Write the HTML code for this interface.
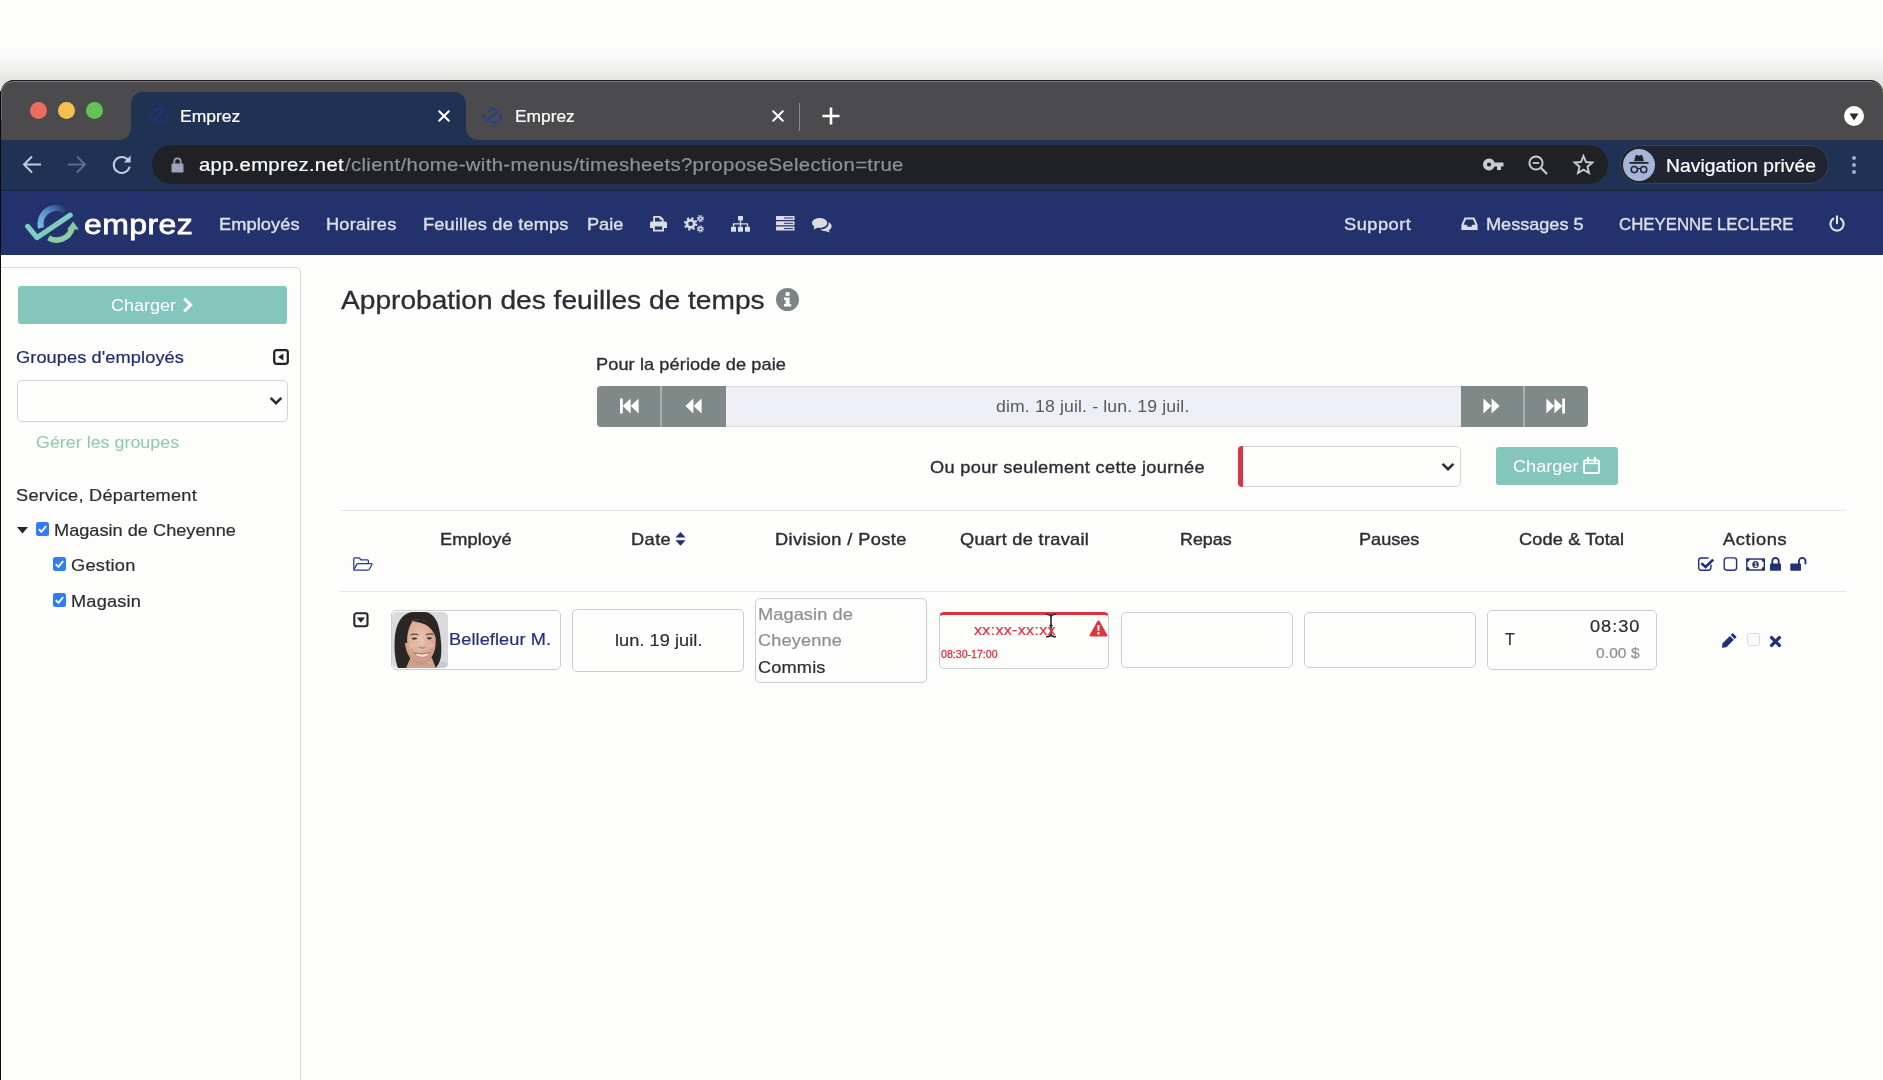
<!DOCTYPE html>
<html lang="fr">
<head>
<meta charset="utf-8">
<title>Emprez</title>
<style>
*{box-sizing:border-box;margin:0;padding:0}
html,body{width:1883px;height:1080px;overflow:hidden}
body{position:relative;background:#fdfdfb;font-family:"Liberation Sans",sans-serif;color:#212529}
.a{position:absolute}
.t{position:absolute;white-space:nowrap;line-height:1;transform-origin:0 50%}
svg{position:absolute;overflow:visible}
/* desktop backdrop above window */
#desk{left:0;top:0;width:1883px;height:100px;background:linear-gradient(#fefefc 0,#fefefc 47px,#fafafb 49px,#f9f9fa 58px,#f6f6f4 60px,#eeeeec 70px,#e5e5e3 80px)}
/* window */
#win{left:1px;top:80px;width:1882px;height:1000px;border-radius:13px 13px 0 0;background:#fdfdfb;overflow:hidden}
#winedge{left:1px;top:80px;width:1882px;height:40px;border-radius:13px 13px 0 0;border-top:1px solid #1c1c1c;box-shadow:inset 0 1px 0 #7b7b7d,inset 1px 0 0 #6a6a6c}
#leftline{left:0;top:91px;width:1px;height:989px;background:#0a0a0a}
#tabstrip{left:0;top:0;width:1883px;height:60px;background:#4b4b4d}
#toolbar{left:0;top:60px;width:1883px;height:51px;background:#1f3253}
#toolline{left:0;top:110px;width:1883px;height:1px;background:#17233f}
#navbar{left:0;top:111px;width:1883px;height:64px;background:#23316c}
.box{position:absolute;border:1px solid #cbcdd5;border-radius:5px;background:#fefefd}
</style>
</head>
<body>
<div class="a" id="desk"></div>
<div class="a" id="win">
<div class="a" id="tabstrip"></div>
<div class="a" id="toolbar"></div>
<div class="a" id="toolline"></div>
<div class="a" id="navbar"></div>
</div>
<div class="a" id="winedge"></div>
<!-- traffic lights -->
<div class="a" style="left:30px;top:102px;width:17px;height:17px;border-radius:50%;background:#ec6a5f"></div>
<div class="a" style="left:58px;top:102px;width:17px;height:17px;border-radius:50%;background:#f5bf4f"></div>
<div class="a" style="left:86px;top:102px;width:17px;height:17px;border-radius:50%;background:#61c455"></div>
<!-- active tab -->
<svg style="left:119px;top:92px" width="360" height="48" viewBox="0 0 360 48"><path d="M0 48 C7 48 12 43 12 36 V12 C12 5 17 0 24 0 H335 C342 0 347 5 347 12 V36 C347 43 352 48 359 48 Z" fill="#1f3253"/></svg>
<!-- favicon 1 (dim) -->
<svg style="left:147px;top:107px" width="23" height="17" viewBox="0 0 23 17" fill="none" stroke="#22337a" stroke-width="2.2" stroke-linecap="round" stroke-linejoin="round"><path d="M1.5 8.5 L6.5 13.5 L18 3"/><path d="M8 4.5 A6 6 0 0 1 15 2.2" stroke-width="2"/><path d="M19.5 8 A6 6 0 0 1 11 14.8" stroke-width="2"/></svg>
<!-- close 1 -->
<svg style="left:438px;top:110px" width="12" height="12" viewBox="0 0 12 12" stroke="#ffffff" stroke-width="2" stroke-linecap="round"><path d="M1.2 1.2 L10.8 10.8 M10.8 1.2 L1.2 10.8"/></svg>
<!-- favicon 2 -->
<svg style="left:481px;top:107px" width="23" height="17" viewBox="0 0 23 17" fill="none" stroke="#2a3d8c" stroke-width="2.2" stroke-linecap="round" stroke-linejoin="round"><path d="M1.5 8.5 L6.5 13.5 L18 3"/><path d="M8 4.5 A6 6 0 0 1 15 2.2" stroke-width="2"/><path d="M19.5 8 A6 6 0 0 1 11 14.8" stroke-width="2"/></svg>
<!-- close 2 -->
<svg style="left:772px;top:110px" width="12" height="12" viewBox="0 0 12 12" stroke="#ffffff" stroke-width="2" stroke-linecap="round"><path d="M1.2 1.2 L10.8 10.8 M10.8 1.2 L1.2 10.8"/></svg>
<!-- separator -->
<div class="a" style="left:799px;top:103px;width:1px;height:28px;background:#8c8c8e"></div>
<!-- plus -->
<svg style="left:822px;top:107px" width="18" height="18" viewBox="0 0 18 18" stroke="#ffffff" stroke-width="2.6" stroke-linecap="butt"><path d="M9 0.5 V17.5 M0.5 9 H17.5"/></svg>
<!-- tab search -->
<div class="a" style="left:1844.2px;top:105.9px;width:20px;height:20px;border-radius:50%;background:#ffffff"></div>
<svg style="left:1849.2px;top:112.6px" width="10" height="8" viewBox="0 0 10 8"><path d="M0.5 0.5 H9.5 L5 7.5 Z" fill="#2b2b2d"/></svg>
<!-- nav arrows -->
<svg style="left:22px;top:155px" width="20" height="19" viewBox="0 0 20 19" fill="none" stroke="#c3cbe0" stroke-width="2" stroke-linecap="butt" stroke-linejoin="miter"><path d="M19 9.5 H2.5 M10 1.5 L2 9.5 L10 17.5"/></svg>
<svg style="left:67px;top:155px" width="20" height="19" viewBox="0 0 20 19" fill="none" stroke="#5a6a96" stroke-width="2" stroke-linecap="butt" stroke-linejoin="miter"><path d="M1 9.5 H17.5 M10 1.5 L18 9.5 L10 17.5"/></svg>
<svg style="left:111px;top:154px" width="22" height="21" viewBox="0 0 22 21" fill="none" stroke="#c3cbe0" stroke-width="2"><path d="M17.2 6.2 A8 8 0 1 0 18.6 12.6"/><path d="M19.6 1.6 V8.4 H12.8 Z" fill="#c3cbe0" stroke="none"/></svg>
<!-- URL pill -->
<div class="a" style="left:152px;top:145px;width:1456px;height:39px;border-radius:20px;background:#202124"></div>
<!-- lock -->
<svg style="left:171px;top:157px" width="13" height="16" viewBox="0 0 13 16"><path d="M3.3 7 V4.6 A3.2 3.2 0 0 1 9.7 4.6 V7" fill="none" stroke="#9aa3b8" stroke-width="1.7"/><rect x="0.5" y="6.6" width="12" height="9" rx="1.3" fill="#9aa3b8"/></svg>
<!-- key -->
<svg style="left:1483px;top:158px" width="21" height="13" viewBox="0 0 21 13"><path fill="#c9cbcd" fill-rule="evenodd" d="M6 0.5 A6 6 0 1 0 11.6 8.6 H14 V12 H18 V8.6 H20.5 V4.4 H11.6 A6 6 0 0 0 6 0.5 Z M6 4.4 A2.1 2.1 0 1 1 6 8.6 A2.1 2.1 0 0 1 6 4.4 Z"/></svg>
<!-- zoom -->
<svg style="left:1528px;top:155px" width="20" height="20" viewBox="0 0 20 20" fill="none" stroke="#c9cbcd" stroke-width="2"><circle cx="8" cy="8" r="6.6"/><path d="M12.8 12.8 L19 19" stroke-width="2.2"/><path d="M4.8 8 H11.2" stroke-width="1.8"/></svg>
<!-- star -->
<svg style="left:1573px;top:154px" width="21" height="20" viewBox="0 0 21 20" fill="none" stroke="#c9cbcd" stroke-width="1.9" stroke-linejoin="miter"><path d="M10.5 2 L13 8 L19.4 8.5 L14.5 12.7 L16 19 L10.5 15.6 L5 19 L6.5 12.7 L1.6 8.5 L8 8 Z"/></svg>
<!-- incognito pill -->
<div class="a" style="left:1620px;top:145px;width:209px;height:39px;border-radius:20px;background:#212431;border:1px solid #39415a"></div>
<div class="a" style="left:1623px;top:149px;width:32px;height:32px;border-radius:50%;background:#a6b6d9"></div>
<svg style="left:1629px;top:154px" width="20" height="22" viewBox="0 0 20 22"><path d="M5 7.2 L6.6 1.6 Q6.9 0.8 7.8 1 L10 1.7 L12.2 1 Q13.1 0.8 13.4 1.6 L15 7.2 Z" fill="#1f2330"/><rect x="0.5" y="8" width="19" height="1.8" fill="#1f2330"/><circle cx="5.3" cy="15.6" r="3.1" fill="none" stroke="#1f2330" stroke-width="1.5"/><circle cx="14.7" cy="15.6" r="3.1" fill="none" stroke="#1f2330" stroke-width="1.5"/><path d="M8.3 15 Q10 13.8 11.7 15" fill="none" stroke="#1f2330" stroke-width="1.4"/></svg>
<!-- menu dots -->
<div class="a" style="left:1852px;top:155.6px;width:4.4px;height:4.4px;border-radius:50%;background:#a0acd3"></div>
<div class="a" style="left:1852px;top:162.8px;width:4.4px;height:4.4px;border-radius:50%;background:#a0acd3"></div>
<div class="a" style="left:1852px;top:169.9px;width:4.4px;height:4.4px;border-radius:50%;background:#a0acd3"></div>

<!-- logo -->
<svg style="left:22px;top:202px" width="60" height="44" viewBox="22 202 60 44" fill="none">
<defs><linearGradient id="lgb" gradientUnits="userSpaceOnUse" x1="40" y1="230" x2="66" y2="207"><stop offset="0" stop-color="#7bbdea"/><stop offset="0.5" stop-color="#5a8ec2"/><stop offset="0.8" stop-color="#3d5a96"/><stop offset="1" stop-color="#2a3a78" stop-opacity="0.3"/></linearGradient></defs>
<path d="M41.0 227.9 A16 16 0 0 1 65.0 210.4" stroke="url(#lgb)" stroke-width="6.2"/>
<path d="M48.5 237.9 A16 16 0 0 0 71.9 228.4" stroke="#8fcba3" stroke-width="5.6"/>
<path d="M67 229.4 L73.2 221.4 L78.8 229.4 Z" fill="#86c79b"/>
<path d="M27.7 226.4 L37 237.6 L70.2 215.2" stroke="#7fccc2" stroke-width="5.2" stroke-linecap="round" stroke-linejoin="round"/>
</svg>
<!-- nav icons -->
<svg style="left:650px;top:216px" width="17" height="16" viewBox="0 0 17 16" fill="#dcdde4"><path fill-rule="evenodd" d="M3.2 0 H10.4 L13.6 3 V6 H3.2 Z M5 1.8 V6 H11.8 V3.8 H9.6 V1.8 Z"/><path fill-rule="evenodd" d="M1.6 5.6 H15.4 A1.6 1.6 0 0 1 17 7.2 V12 H14 V15.6 H3 V12 H0 V7.2 A1.6 1.6 0 0 1 1.6 5.6 Z M4.8 10.6 V13.8 H12.2 V10.6 Z"/></svg>
<svg style="left:684px;top:215px" width="21" height="18" viewBox="0 0 21 18" fill="none" stroke="#dcdde4"><circle cx="6.6" cy="8.8" r="3.6" stroke-width="2.6"/><circle cx="6.6" cy="8.8" r="5.6" stroke-width="2.2" stroke-dasharray="2.2 2.2"/><circle cx="16.4" cy="3.6" r="1.7" stroke-width="1.5"/><circle cx="16.4" cy="3.6" r="3" stroke-width="1.3" stroke-dasharray="1.2 1.15"/><circle cx="16.4" cy="13.9" r="1.7" stroke-width="1.5"/><circle cx="16.4" cy="13.9" r="3" stroke-width="1.3" stroke-dasharray="1.2 1.15"/></svg>
<svg style="left:731px;top:216px" width="19" height="16" viewBox="0 0 19 16" fill="#dcdde4"><rect x="7" y="0" width="5" height="4.6" rx="0.6"/><rect x="0" y="10.8" width="5" height="5" rx="0.6"/><rect x="7" y="10.8" width="5" height="5" rx="0.6"/><rect x="14" y="10.8" width="5" height="5" rx="0.6"/><path d="M9.5 4.6 V10.8 M2.5 10.8 V7.8 H16.5 V10.8" fill="none" stroke="#dcdde4" stroke-width="1.3"/></svg>
<svg style="left:776px;top:216px" width="19" height="15" viewBox="0 0 19 15" fill="#dcdde4"><rect x="0" y="0" width="18.5" height="4" rx="0.6"/><rect x="0" y="5.3" width="18.5" height="4" rx="0.6"/><rect x="0" y="10.6" width="18.5" height="4" rx="0.6"/><path d="M8 2 H17 M8 7.3 H17 M8 12.6 H17" stroke="#23316c" stroke-width="1"/></svg>
<svg style="left:812px;top:218px" width="20" height="15" viewBox="0 0 20 15" fill="#dcdde4"><ellipse cx="7.6" cy="5" rx="7.6" ry="5"/><path d="M2.4 8 L1.6 11.4 L6 9.4 Z"/><path d="M16.4 4.2 A6.2 4.6 0 0 1 16.6 12.2 L18.2 14.6 L14 13.2 A7.5 5 0 0 1 8.2 11.6 A9 6 0 0 0 16.4 4.2 Z"/></svg>
<!-- inbox icon (Messages) -->
<svg style="left:1461px;top:217px" width="17" height="14" viewBox="0 0 17 14" fill="#dcdde4"><path fill-rule="evenodd" d="M3.6 0.6 H13.4 L16.6 7.8 V13 H0.4 V7.8 Z M4.9 2.4 L2.6 7.8 H5.6 L6.6 9.8 H10.4 L11.4 7.8 H14.4 L12.1 2.4 Z"/></svg>
<!-- power -->
<svg style="left:1829px;top:215px" width="16" height="17" viewBox="0 0 16 17" fill="none" stroke="#e4e5ea" stroke-width="2.1" stroke-linecap="round"><path d="M8 1.2 V8.2"/><path d="M4.3 3.6 A6.6 6.6 0 1 0 11.7 3.6"/></svg>
<!-- sidebar -->
<div class="a" style="left:-4px;top:267px;width:305px;height:830px;border:1px solid #d8d8da;border-radius:0 5px 0 0;background:#fdfdfb"></div>
<div class="a" style="left:18px;top:286px;width:269px;height:38px;border-radius:3px;background:#84c6bb"></div>
<svg style="left:182px;top:297px" width="11" height="16" viewBox="0 0 11 16"><path d="M2.2 1.6 L8.6 8 L2.2 14.4" fill="none" stroke="#fff" stroke-width="3" stroke-linejoin="miter"/></svg>
<!-- caret-square-left -->
<svg style="left:273px;top:349px" width="16" height="16" viewBox="0 0 16 16"><rect x="1.2" y="1.2" width="13.6" height="13.6" rx="2.2" fill="none" stroke="#202124" stroke-width="2.2"/><path d="M10.4 4.4 V11.6 L5 8 Z" fill="#202124"/></svg>
<!-- select -->
<div class="box" style="left:16.6px;top:380.2px;width:271.8px;height:41.4px;border-color:#d3d4da"></div>
<svg style="left:269px;top:396px" width="14" height="10" viewBox="0 0 14 10"><path d="M1.6 1.8 L7 7.2 L12.4 1.8" fill="none" stroke="#2b2d31" stroke-width="2.5"/></svg>
<!-- tree -->
<svg style="left:17px;top:527px" width="11" height="7" viewBox="0 0 11 7"><path d="M0 0 H11 L5.5 6.6 Z" fill="#212529"/></svg>
<div class="a" style="left:36px;top:522px;width:13px;height:14px;border-radius:2.5px;background:#2f7df6"></div>
<svg style="left:36px;top:522px" width="13" height="14" viewBox="0 0 13 14"><path d="M2.8 7.2 L5.4 9.8 L10.2 4" fill="none" stroke="#fff" stroke-width="1.9"/></svg>
<div class="a" style="left:53px;top:557px;width:13px;height:14px;border-radius:2.5px;background:#2f7df6"></div>
<svg style="left:53px;top:557px" width="13" height="14" viewBox="0 0 13 14"><path d="M2.8 7.2 L5.4 9.8 L10.2 4" fill="none" stroke="#fff" stroke-width="1.9"/></svg>
<div class="a" style="left:53px;top:593px;width:13px;height:14px;border-radius:2.5px;background:#2f7df6"></div>
<svg style="left:53px;top:593px" width="13" height="14" viewBox="0 0 13 14"><path d="M2.8 7.2 L5.4 9.8 L10.2 4" fill="none" stroke="#fff" stroke-width="1.9"/></svg>
<!-- info icon -->
<div class="a" style="left:776px;top:288px;width:23px;height:23px;border-radius:50%;background:#7c8586"></div>
<svg style="left:776px;top:288px" width="23" height="23" viewBox="0 0 23 23" fill="#fdfdfb"><rect x="9.6" y="4.2" width="4" height="3.6"/><path d="M8 9.6 H13.6 V16 H15.2 V18.4 H8 V16 H9.6 V12 H8 Z"/></svg>
<!-- period bar -->
<div class="a" style="left:597px;top:386px;width:991px;height:41px;border-radius:4px;background:#eeeef5;border:1px solid #d9dae2"></div>
<div class="a" style="left:597px;top:386px;width:129px;height:41px;border-radius:4px 0 0 4px;background:#7f8988"></div>
<div class="a" style="left:660px;top:386px;width:2px;height:41px;background:#a9b0af"></div>
<div class="a" style="left:1461px;top:386px;width:127px;height:41px;border-radius:0 4px 4px 0;background:#7f8988"></div>
<div class="a" style="left:1523px;top:386px;width:2px;height:41px;background:#a9b0af"></div>
<svg style="left:620px;top:398px" width="19" height="16" viewBox="0 0 19 16" fill="#fff"><rect x="0" y="0.5" width="2.8" height="15"/><path d="M10.6 0.5 V15.5 L2.8 8 Z M18.6 0.5 V15.5 L10.8 8 Z"/></svg>
<svg style="left:685px;top:398px" width="17" height="16" viewBox="0 0 17 16" fill="#fff"><path d="M8.4 0.5 V15.5 L0.4 8 Z M16.6 0.5 V15.5 L8.6 8 Z"/></svg>
<svg style="left:1483px;top:398px" width="17" height="16" viewBox="0 0 17 16" fill="#fff"><path d="M0.4 0.5 V15.5 L8.4 8 Z M8.6 0.5 V15.5 L16.6 8 Z"/></svg>
<svg style="left:1546px;top:398px" width="19" height="16" viewBox="0 0 19 16" fill="#fff"><path d="M0.4 0.5 V15.5 L8.2 8 Z M8.4 0.5 V15.5 L16.2 8 Z"/><rect x="16.2" y="0.5" width="2.8" height="15"/></svg>
<!-- day select -->
<div class="box" style="left:1238px;top:446px;width:223px;height:41px;border-color:#d3d4da"></div>
<div class="a" style="left:1238px;top:446px;width:5px;height:41px;border-radius:4px 0 0 4px;background:#dc3545"></div>
<svg style="left:1441px;top:462px" width="14" height="10" viewBox="0 0 14 10"><path d="M1.6 1.8 L7 7.2 L12.4 1.8" fill="none" stroke="#2b2d31" stroke-width="2.5"/></svg>
<!-- charger button 2 -->
<div class="a" style="left:1496px;top:447px;width:122px;height:38px;border-radius:3px;background:#84c6bb"></div>
<svg style="left:1583px;top:457px" width="17" height="17" viewBox="0 0 17 17" fill="none" stroke="#fff"><rect x="1" y="3.4" width="15" height="12.6" rx="1" stroke-width="1.8"/><path d="M1 6.4 H16" stroke-width="1.6"/><path d="M5 0.8 V4.6 M12 0.8 V4.6" stroke-width="2.2" stroke-linecap="round"/></svg>
<!-- table lines -->
<div class="a" style="left:340px;top:510px;width:1506px;height:1px;background:#e3e5ee"></div>
<div class="a" style="left:340px;top:591px;width:1506px;height:1px;background:#e3e5ee"></div>
<!-- folder-open-o -->
<svg style="left:353px;top:557px" width="20" height="14" viewBox="0 0 20 14" fill="none" stroke="#2a3a84" stroke-width="1.25" stroke-linejoin="round"><path d="M0.8 11.8 V1.8 Q0.8 0.8 1.8 0.8 H5.8 Q6.6 0.8 7 1.6 L7.6 2.8 H14.4 Q15.4 2.8 15.4 3.8 V6.6"/><path d="M0.9 12.4 L3.8 7.4 Q4.2 6.7 5 6.7 H18.4 Q19.3 6.7 18.9 7.5 L16.2 12.5 Q15.8 13.2 15 13.2 H1.5 Q0.6 13.2 0.9 12.4 Z"/></svg>
<!-- sort icon -->
<svg style="left:675px;top:532px" width="11" height="14" viewBox="0 0 11 14" fill="#22307a"><path d="M5.5 0 L10.6 5.6 H0.4 Z M0.4 8.2 H10.6 L5.5 13.8 Z"/></svg>
<!-- header action icons -->
<svg style="left:1690px;top:550px" width="125" height="30" viewBox="1690 550 125 30" fill="none" stroke="#22307a">
<path d="M1710.9 564.4 V567.8 Q1710.9 570.2 1708.5 570.2 H1701.1 Q1698.7 570.2 1698.7 567.8 V560.4 Q1698.7 558 1701.1 558 H1708.6" stroke-width="1.4"/>
<path d="M1701.4 563.3 L1705.6 566.9 L1713.2 559.6" stroke-width="2.7"/>
<rect x="1724.2" y="557.9" width="12.4" height="12.3" rx="2.6" stroke-width="1.4"/>
<rect x="1746.1" y="558.3" width="18.9" height="12.4" fill="#22307a" stroke="none"/>
<path d="M1749.6 559.8 H1761.5 A2.2 2.2 0 0 0 1763.6 561.9 V567.1 A2.2 2.2 0 0 0 1761.5 569.2 H1749.6 A2.2 2.2 0 0 0 1747.5 567.1 V561.9 A2.2 2.2 0 0 0 1749.6 559.8 Z" fill="#fdfdfb" stroke="none"/>
<ellipse cx="1755.5" cy="564.5" rx="3.2" ry="3.5" fill="#22307a" stroke="none"/>
<path d="M1754.6 563.2 L1755.9 562.4 V566.2 M1754.5 566.4 H1757.2" stroke="#fdfdfb" stroke-width="1"/>
<path d="M1772.3 564 V561.2 A3.2 3.2 0 0 1 1778.7 561.2 V564" stroke-width="1.9"/>
<rect x="1770" y="563.6" width="11" height="7.1" rx="0.8" fill="#22307a" stroke="none"/>
<path d="M1798.9 564 V561.2 A3.3 3.3 0 0 1 1805.5 561.2 V563.6" stroke-width="1.9" stroke-linecap="round"/>
<rect x="1790.3" y="563.6" width="10.7" height="7.1" rx="0.8" fill="#22307a" stroke="none"/>
</svg>
<!-- caret-square-down -->
<svg style="left:353px;top:611.5px" width="16" height="16" viewBox="0 0 16 16"><rect x="1.3" y="1.3" width="13.2" height="13" rx="2.2" fill="none" stroke="#27292c" stroke-width="2.1"/><path d="M3.8 5.6 H12 L7.9 10.8 Z" fill="#27292c"/></svg>
<!-- row boxes -->
<div class="box" style="left:391px;top:610px;width:170px;height:60px"></div>
<div class="box" style="left:572px;top:609px;width:172px;height:63px"></div>
<div class="box" style="left:755px;top:598px;width:172px;height:85px"></div>
<div class="box" style="left:939px;top:611.6px;width:170px;height:57.6px;border-top:3px solid #e0323c"></div>
<div class="box" style="left:1121px;top:612px;width:172px;height:56px"></div>
<div class="box" style="left:1304px;top:612px;width:172px;height:56px"></div>
<div class="box" style="left:1487px;top:610px;width:170px;height:60px"></div>
<!-- warning triangle -->
<svg style="left:1089px;top:620px" width="19" height="17" viewBox="0 0 19 17"><path d="M9.5 0.6 Q10.3 0.6 10.8 1.5 L18.4 14.9 Q18.9 16.6 17.2 16.6 H1.8 Q0.1 16.6 0.6 14.9 L8.2 1.5 Q8.7 0.6 9.5 0.6 Z" fill="#e0343f"/><path d="M8.3 5.2 H10.7 L10.3 11 H8.7 Z" fill="#fdfdfb"/><rect x="8.4" y="12.2" width="2.2" height="2.2" fill="#fdfdfb"/></svg>
<!-- I-beam cursor -->
<svg style="left:1045px;top:613px" width="12" height="25" viewBox="0 0 12 25" fill="none" stroke="#2a2a2a" stroke-width="1.6"><path d="M1 1.2 Q5 1 6 3.4 Q7 1 11 1.2 M6 3.2 V21.8 M1 23.8 Q5 24 6 21.6 Q7 24 11 23.8 M4.4 12.6 H7.6"/></svg>
<!-- row actions -->
<svg style="left:1721px;top:632.4px" width="17" height="16.4" viewBox="0 0 16 16" fill="#22307a"><path d="M11.2 1 L15 4.8 L13 6.8 L9.2 3 Z M8.4 3.8 L12.2 7.6 L5 14.8 L0.6 15.4 L1.2 11 Z"/></svg>
<div class="a" style="left:1746.6px;top:633.2px;width:13.4px;height:12.8px;border:1px solid #d9dae0;border-radius:2.5px;background:#f9f9fb"></div>
<svg style="left:1769.2px;top:634.6px" width="13" height="13" viewBox="0 0 13 13" stroke="#22307a" stroke-width="3.3" stroke-linecap="round"><path d="M2.6 2.6 L10.4 10.4 M10.4 2.6 L2.6 10.4"/></svg>
<!-- avatar -->
<svg style="left:392px;top:611.6px" width="56" height="56" viewBox="0 0 56 56"><defs><clipPath id="avc"><rect x="0" y="0" width="56" height="56" rx="5"/></clipPath><filter id="avb" x="-10%" y="-10%" width="120%" height="120%"><feGaussianBlur stdDeviation="0.75"/></filter><radialGradient id="avs" cx="0.5" cy="0.4" r="0.62"><stop offset="0" stop-color="#e8c3b1"/><stop offset="0.55" stop-color="#ddb09a"/><stop offset="1" stop-color="#c2937d"/></radialGradient></defs><g clip-path="url(#avc)"><rect width="56" height="56" fill="#dadadc"/><g filter="url(#avb)"><path d="M43 56 L47 49 L56 51 V56 Z" fill="#c9cad0"/><path d="M6 56 C3 48 2 38 2.8 26 C3.4 17 6 10 10 5.6 C13 2 17 0 22 0 H33 C38 0.4 42 4 44.6 9 C47 14 48.4 22 49 30 C49.6 38 49.6 46 47.4 50 C46.4 52.6 45 54.6 43.6 56 Z" fill="#2b2827"/><path d="M14 56 L18.4 46 H40 L43.8 56 Z" fill="#cfa28c"/><path d="M12.8 30 C12.2 22 14.4 14 18.8 8.6 C22 7.4 28 7.4 32 8.2 C37 9.4 42 15 43.4 23 C44.2 29 43.8 34 42.4 39 C40.6 45 36 52 29.6 53 C24 53.4 18 47.6 15.4 41 C13.8 37 13 33 12.8 30 Z" fill="url(#avs)"/><path d="M12.4 31 C11 22 13 13 18.6 7.4 L20.6 9 C16.6 15 14.8 23 15.2 31 Z" fill="#2b2827"/><path d="M19 8.8 C25 7 33 7.4 38 11 C42 14 44 20 44.4 27 C42 20 38 14.4 32 12 C27 10 22 9.6 19 8.8 Z" fill="#2b2827"/><ellipse cx="20.5" cy="33.6" rx="3.4" ry="2.2" fill="#eab8b0" opacity="0.75"/><ellipse cx="39" cy="33.2" rx="3" ry="2.2" fill="#eab8b0" opacity="0.75"/><path d="M22 41 Q30 43.6 38 40.6 Q36 46.6 30 46.8 Q24 46.6 22 41 Z" fill="#cf8f8e"/><path d="M23.4 41.6 Q30 43.6 36.8 41.2 Q34.6 44.8 30 44.8 Q25.4 44.8 23.4 41.6 Z" fill="#f4e8e2"/><path d="M21.4 40.8 Q30 43.2 38.6 40.4" stroke="#a46a5c" stroke-width="0.9" fill="none"/><ellipse cx="22.4" cy="26.6" rx="2.7" ry="1.15" fill="#44332e"/><ellipse cx="37.4" cy="26.3" rx="2.6" ry="1.15" fill="#44332e"/><path d="M18.4 23 Q22 21.4 26.4 22.8 M34 22.8 Q38 21.2 41.4 22.4" stroke="#584640" stroke-width="1.1" fill="none"/><path d="M27.2 35 Q30.4 37 33.6 35" stroke="#b98572" stroke-width="1.3" fill="none"/><path d="M30.4 27 V34" stroke="#ecc9b8" stroke-width="2" opacity="0.7"/><path d="M19.6 37 Q21 40 22 41.4 M40 36.6 Q39 40 38 41" stroke="#c0907c" stroke-width="0.8" fill="none"/></g></g></svg>

<div class="a" style="left:0;top:0;width:1883px;height:1080px;will-change:transform">
<div class="t" style="left:180.1px;top:108px;font-size:16.5px;color:#ffffff;transform:scaleX(1.062);-webkit-text-stroke:0.2px #ffffff">Emprez</div>
<div class="t" style="left:514.9px;top:108px;font-size:16.5px;color:#ffffff;transform:scaleX(1.051);-webkit-text-stroke:0.2px #ffffff">Emprez</div>
<div class="t" style="left:198.7px;top:155px;font-size:19px;color:#ffffff;letter-spacing:0.24px;transform:scaleX(1.07);-webkit-text-stroke:0.2px #ffffff">app.emprez.net</div>
<div class="t" style="left:345.2px;top:155px;font-size:19px;color:#8f9297;letter-spacing:0.32px;transform:scaleX(1.07);-webkit-text-stroke:0.2px #8f9297">/client/home-with-menus/timesheets?proposeSelection=true</div>
<div class="t" style="left:1665.6px;top:157px;font-size:18px;color:#ffffff;letter-spacing:0.07px;transform:scaleX(1.07);-webkit-text-stroke:0.2px #ffffff">Navigation privée</div>
<div class="t" style="left:84.0px;top:210px;font-size:28.5px;color:#ffffff;letter-spacing:0.42px;transform:scaleX(1.12);-webkit-text-stroke:0.8px #ffffff">emprez</div>
<div class="t" style="left:218.6px;top:216px;font-size:17px;color:#dfe0e7;letter-spacing:0.09px;transform:scaleX(1.07);-webkit-text-stroke:0.35px #dfe0e7">Employés</div>
<div class="t" style="left:325.9px;top:216px;font-size:17px;color:#dfe0e7;letter-spacing:0.21px;transform:scaleX(1.07);-webkit-text-stroke:0.35px #dfe0e7">Horaires</div>
<div class="t" style="left:423.3px;top:216px;font-size:17px;color:#dfe0e7;letter-spacing:0.17px;transform:scaleX(1.07);-webkit-text-stroke:0.35px #dfe0e7">Feuilles de temps</div>
<div class="t" style="left:586.5px;top:216px;font-size:17px;color:#dfe0e7;transform:scaleX(1.069);-webkit-text-stroke:0.35px #dfe0e7">Paie</div>
<div class="t" style="left:1343.8px;top:216px;font-size:17px;color:#dfe0e7;letter-spacing:0.49px;transform:scaleX(1.07);-webkit-text-stroke:0.35px #dfe0e7">Support</div>
<div class="t" style="left:1486.1px;top:216px;font-size:17px;color:#dfe0e7;transform:scaleX(1.064);-webkit-text-stroke:0.35px #dfe0e7">Messages 5</div>
<div class="t" style="left:1618.6px;top:216px;font-size:17px;color:#dfe0e7;letter-spacing:-0.01px;transform:scaleX(0.989);-webkit-text-stroke:0.35px #dfe0e7">CHEYENNE LECLERE</div>
<div class="t" style="left:110.9px;top:297px;font-size:17px;color:#ffffff;transform:scaleX(1.06)">Charger</div>
<div class="t" style="left:16.1px;top:349px;font-size:17px;color:#1f2d6e;letter-spacing:0.09px;transform:scaleX(1.07);-webkit-text-stroke:0.2px #1f2d6e">Groupes d'employés</div>
<div class="t" style="left:35.6px;top:434px;font-size:17px;color:#8ccba6;transform:scaleX(1.052)">Gérer les groupes</div>
<div class="t" style="left:16.2px;top:487px;font-size:17px;color:#2a2d32;letter-spacing:0.24px;transform:scaleX(1.07);-webkit-text-stroke:0.2px #2a2d32">Service, Département</div>
<div class="t" style="left:53.6px;top:522px;font-size:17px;color:#2a2d32;transform:scaleX(1.069);-webkit-text-stroke:0.2px #2a2d32">Magasin de Cheyenne</div>
<div class="t" style="left:70.5px;top:557px;font-size:17px;color:#2a2d32;letter-spacing:0.25px;transform:scaleX(1.07);-webkit-text-stroke:0.2px #2a2d32">Gestion</div>
<div class="t" style="left:70.5px;top:593px;font-size:17px;color:#2a2d32;letter-spacing:0.18px;transform:scaleX(1.07);-webkit-text-stroke:0.2px #2a2d32">Magasin</div>
<div class="t" style="left:340.6px;top:287px;font-size:26.5px;color:#2a2d32;transform:scaleX(1.061);-webkit-text-stroke:0.3px #2a2d32">Approbation des feuilles de temps</div>
<div class="t" style="left:595.8px;top:356px;font-size:17px;color:#2a2d32;letter-spacing:0.08px;transform:scaleX(1.07);-webkit-text-stroke:0.33px #2a2d32">Pour la période de paie</div>
<div class="t" style="left:995.9px;top:398px;font-size:16.5px;color:#555a60;letter-spacing:0.13px;transform:scaleX(1.07)">dim. 18 juil. - lun. 19 juil.</div>
<div class="t" style="left:929.9px;top:459px;font-size:17px;color:#2a2d32;letter-spacing:0.3px;transform:scaleX(1.07);-webkit-text-stroke:0.33px #2a2d32">Ou pour seulement cette journée</div>
<div class="t" style="left:1512.9px;top:458px;font-size:17px;color:#ffffff;transform:scaleX(1.067)">Charger</div>
<div class="t" style="left:439.5px;top:531px;font-size:17px;color:#2a2d32;letter-spacing:0.13px;transform:scaleX(1.07);-webkit-text-stroke:0.4px #2a2d32">Employé</div>
<div class="t" style="left:630.9px;top:531px;font-size:17px;color:#2a2d32;letter-spacing:0.41px;transform:scaleX(1.07);-webkit-text-stroke:0.4px #2a2d32">Date</div>
<div class="t" style="left:774.9px;top:531px;font-size:17px;color:#2a2d32;letter-spacing:0.37px;transform:scaleX(1.07);-webkit-text-stroke:0.4px #2a2d32">Division / Poste</div>
<div class="t" style="left:959.5px;top:531px;font-size:17px;color:#2a2d32;letter-spacing:0.28px;transform:scaleX(1.07);-webkit-text-stroke:0.4px #2a2d32">Quart de travail</div>
<div class="t" style="left:1180.4px;top:531px;font-size:17px;color:#2a2d32;transform:scaleX(1.05);-webkit-text-stroke:0.4px #2a2d32">Repas</div>
<div class="t" style="left:1358.8px;top:531px;font-size:17px;color:#2a2d32;transform:scaleX(1.065);-webkit-text-stroke:0.4px #2a2d32">Pauses</div>
<div class="t" style="left:1519.3px;top:531px;font-size:17px;color:#2a2d32;letter-spacing:0.11px;transform:scaleX(1.07);-webkit-text-stroke:0.4px #2a2d32">Code &amp; Total</div>
<div class="t" style="left:1723.2px;top:531px;font-size:17px;color:#2a2d32;letter-spacing:0.6px;transform:scaleX(1.07);-webkit-text-stroke:0.4px #2a2d32">Actions</div>
<div class="t" style="left:448.5px;top:631px;font-size:17px;color:#22307a;letter-spacing:0.07px;transform:scaleX(1.07);-webkit-text-stroke:0.2px #22307a">Bellefleur M.</div>
<div class="t" style="left:614.8px;top:632px;font-size:17px;color:#2a2d32;letter-spacing:0.04px;transform:scaleX(1.07);-webkit-text-stroke:0.2px #2a2d32">lun. 19 juil.</div>
<div class="t" style="left:757.7px;top:606px;font-size:17px;color:#8b8e93;letter-spacing:0.08px;transform:scaleX(1.07);-webkit-text-stroke:0.2px #8b8e93">Magasin de</div>
<div class="t" style="left:757.7px;top:632px;font-size:17px;color:#8b8e93;letter-spacing:0.13px;transform:scaleX(1.07);-webkit-text-stroke:0.2px #8b8e93">Cheyenne</div>
<div class="t" style="left:757.7px;top:659px;font-size:17px;color:#2a2d32;letter-spacing:0.14px;transform:scaleX(1.07);-webkit-text-stroke:0.2px #2a2d32">Commis</div>
<div class="t" style="left:974.3px;top:622px;font-size:15px;color:#e0343f;letter-spacing:0.29px;transform:scaleX(1.07);-webkit-text-stroke:0.2px #e0343f">xx:xx-xx:xx</div>
<div class="t" style="left:941.0px;top:650px;font-size:10px;color:#e0343f;transform:scaleX(1.06);-webkit-text-stroke:0.3px #e0343f">08:30-17:00</div>
<div class="t" style="left:1505.2px;top:631px;font-size:17px;color:#2a2d32;transform:scaleX(0.94);-webkit-text-stroke:0.2px #2a2d32">T</div>
<div class="t" style="left:1589.6px;top:618px;font-size:17px;color:#2a2d32;letter-spacing:0.92px;transform:scaleX(1.07);-webkit-text-stroke:0.2px #2a2d32">08:30</div>
<div class="t" style="left:1595.6px;top:646px;font-size:14.5px;color:#8b8e93;letter-spacing:0.09px;transform:scaleX(1.07);-webkit-text-stroke:0.2px #8b8e93">0.00 $</div>
</div>
<div class="a" id="leftline"></div>
</body>
</html>
